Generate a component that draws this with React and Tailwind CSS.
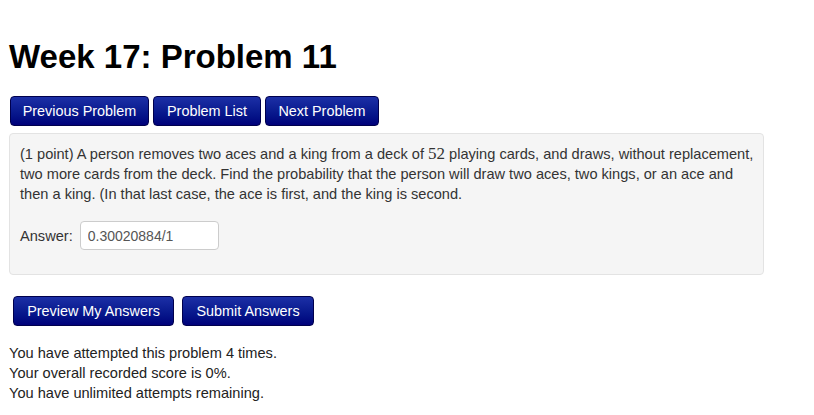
import React from "react";

const btn =
  "h-[30px] px-0 whitespace-nowrap rounded-[4px] border border-[#00004d] bg-gradient-to-b from-[#1c2fa6] to-[#00007a] text-white text-[14.4px] leading-none";

export default function App() {
  return (
    <div className="w-[814px] h-[415px] bg-white overflow-hidden font-['Liberation_Sans',Arial,sans-serif] text-[#333]">
      <h1 className="pl-[9px] pt-[38px] text-[33px] font-bold text-black leading-[38px]">
        Week 17: Problem 11
      </h1>

      {/* Nav buttons */}
      <div className="flex gap-[4px] pl-[10px] mt-[20px]">
        <button className={`${btn} w-[139px]`}>Previous Problem</button>
        <button className={`${btn} w-[108px]`}>Problem List</button>
        <button className={`${btn} w-[114px]`}>Next Problem</button>
      </div>

      {/* Problem card */}
      <div className="ml-[9px] mt-[7px] w-[755px] h-[142px] bg-[#f5f5f5] border border-[#e3e3e3] rounded-[4px] pl-[10px] pr-[8px] pt-[10px] text-[14.6px] leading-[20px]">
        <p>
          (1 point) A person removes two aces and a king from a deck of{" "}
          <span className="font-['Liberation_Serif',serif] text-[17px] leading-none">52</span> playing cards, and
          draws, without replacement, two more cards from the deck. Find the probability that the person will draw two
          aces, two kings, or an ace and then a king. (In that last case, the ace is first, and the king is second.
        </p>
        <div className="flex items-center gap-[7px] mt-[17px]">
          <span>Answer:</span>
          <input
            readOnly
            value="0.30020884/1"
            className="w-[139px] h-[29px] bg-white border border-[#ccc] rounded-[4px] px-[7px] text-[14px] text-[#555] outline-none"
          />
        </div>
      </div>

      {/* Submit buttons */}
      <div className="flex gap-[8px] pl-[13px] mt-[21px]">
        <button className={`${btn} w-[161px]`}>Preview My Answers</button>
        <button className={`${btn} w-[132px]`}>Submit Answers</button>
      </div>

      <div className="pl-[9px] mt-[17px] text-[14.6px] leading-[20px] text-[#222]">
        <p>You have attempted this problem 4 times.</p>
        <p>Your overall recorded score is 0%.</p>
        <p>You have unlimited attempts remaining.</p>
      </div>
    </div>
  );
}
